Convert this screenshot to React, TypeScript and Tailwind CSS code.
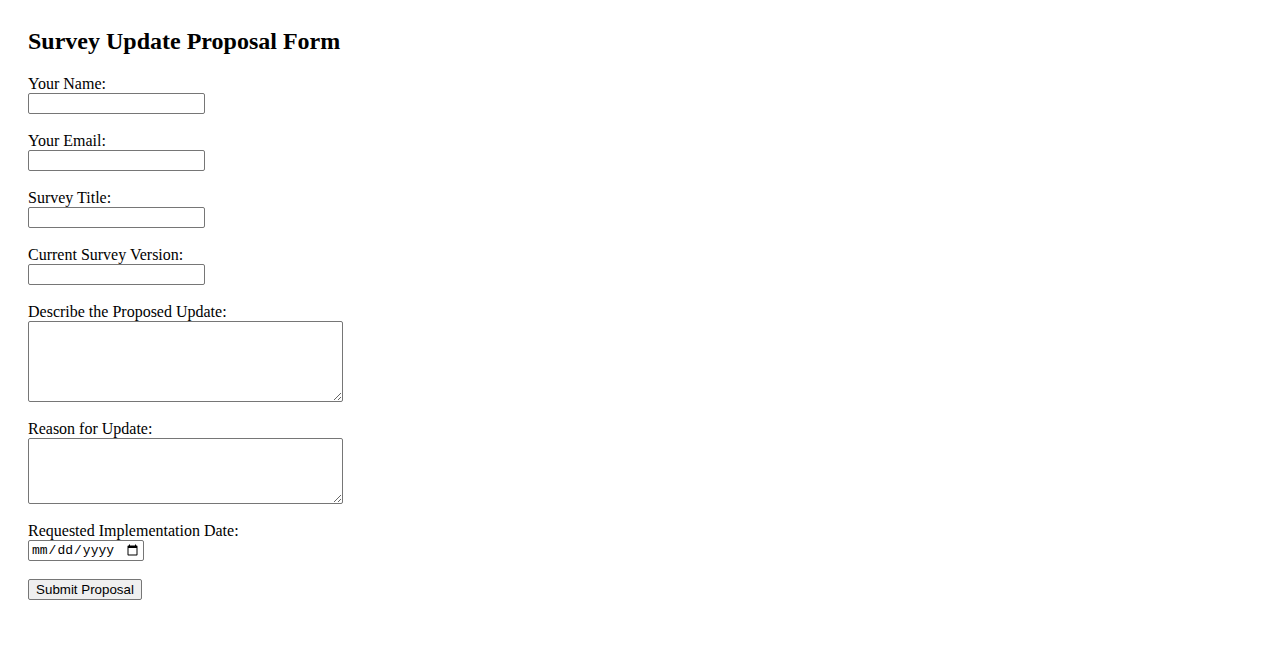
import React from 'react'

const fieldClass =
  'block h-[21px] w-[177px] rounded-[2px] border border-[#767676] bg-white px-[2px] text-[13.33px] [font-family:"Liberation_Sans",Arial,sans-serif]'

const areaClass =
  'block w-[315px] rounded-[2px] border border-[#767676] bg-white px-[2px] py-[2px] text-[13.33px] [font-family:"Liberation_Mono",monospace]'

export default function App() {
  const textFields = ['Your Name:', 'Your Email:', 'Survey Title:', 'Current Survey Version:']

  return (
    <div className="min-h-screen bg-white px-[28px] pt-[27px] text-black [font-family:'Liberation_Serif','Times_New_Roman',serif]">
      <h2 className="mb-[20px] text-[24px] font-bold leading-[28px]">Survey Update Proposal Form</h2>

      <form className="flex flex-col items-start" onSubmit={(e) => e.preventDefault()}>
        {textFields.map((label) => (
          <div key={label} className="mb-[18px]">
            <label className="block text-[16px] leading-[18px]">{label}</label>
            <input type={label === 'Your Email:' ? 'email' : 'text'} className={fieldClass} />
          </div>
        ))}

        <div className="mb-[18px]">
          <label className="block text-[16px] leading-[18px]">Describe the Proposed Update:</label>
          <textarea className={`${areaClass} h-[81px]`} />
        </div>

        <div className="mb-[18px]">
          <label className="block text-[16px] leading-[18px]">Reason for Update:</label>
          <textarea className={`${areaClass} h-[66px]`} />
        </div>

        <div className="mb-[18px]">
          <label className="block text-[16px] leading-[18px]">Requested Implementation Date:</label>
          <input
            type="date"
            className='block h-[21px] w-[116px] rounded-[2px] border border-[#767676] bg-white px-[2px] text-[13px] [font-family:"Liberation_Mono",monospace]'
          />
        </div>

        <button
          type="submit"
          className='h-[21px] w-[114px] rounded-[2px] border border-[#767676] bg-[#efefef] px-[6px] text-[13.33px] leading-[15px] [font-family:"Liberation_Sans",Arial,sans-serif]'
        >
          Submit Proposal
        </button>
      </form>
    </div>
  )
}
